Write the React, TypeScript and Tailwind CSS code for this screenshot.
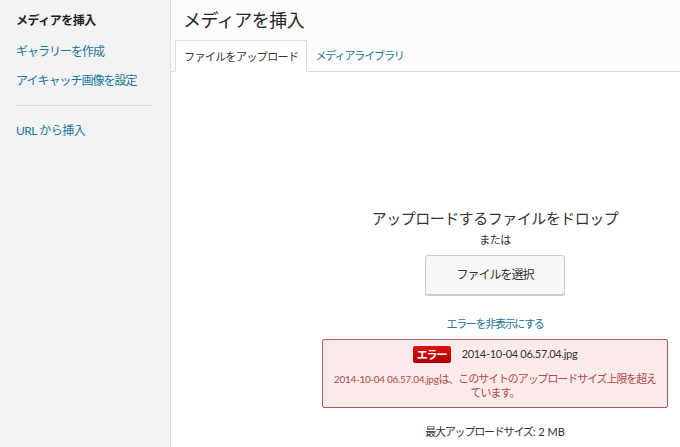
const FONT = "font-['Lato','Noto_Sans_CJK_JP',sans-serif]";

export default function App() {
  return (
    <div className={`flex h-[447px] w-[680px] overflow-hidden bg-white ${FONT}`}>
      {/* Sidebar menu */}
      <aside className="w-[171px] shrink-0 border-r border-[#dddddd] bg-[#f3f3f3] px-4 pt-[12px]">
        <div className="text-[12px] font-bold leading-[18px] tracking-[-0.5px] text-[#222]">メディアを挿入</div>
        <div className="mt-[13px] text-[12px] leading-[18px] tracking-[-1px] text-[#21759b]">ギャラリーを作成</div>
        <div className="mt-[11px] text-[12px] leading-[18px] tracking-[-1px] text-[#21759b]">アイキャッチ画像を設定</div>
        <div className="mt-[15px] mr-[1px] h-px bg-[#dfdfdf]" />
        <div className="mt-[16px] text-[12px] leading-[18px] tracking-[-0.5px] text-[#21759b]">URL から挿入</div>
      </aside>

      {/* Main frame */}
      <main className="flex min-w-0 flex-1 flex-col">
        <header className="bg-[#fcfcfc]">
          <h1 className="pl-[12px] pt-[8px] text-[18px] font-normal leading-[24px] tracking-[-0.5px] text-[#23282d]">
            メディアを挿入
          </h1>
          <div className="mt-[8px] flex items-end border-b border-[#dddddd] pl-[4px]">
            <div className="-mb-px border border-b-white border-[#dddddd] bg-white px-[8px] pb-[6px] pt-[7px] text-[11px] leading-[17px] tracking-[-0.6px] text-[#333]">
              ファイルをアップロード
            </div>
            <div className="px-[8px] pb-[7px] pt-[7px] text-[11px] leading-[17px] tracking-[-1.1px] text-[#21759b]">
              メディアライブラリ
            </div>
          </div>
        </header>

        <section className="flex-1 bg-white">
          <div className="ml-[151px] flex w-[346px] flex-col items-center pt-[135px]">
            <div className="text-[15px] leading-[22px] tracking-[-0.5px] text-[#333]">アップロードするファイルをドロップ</div>
            <div className="mt-[3px] text-[11px] leading-[16px] tracking-[-0.5px] text-[#333]">または</div>
            <button className="mt-[7px] h-[40px] w-[140px] rounded-[3px] border border-[#cccccc] bg-[#f7f7f7] text-[12px] tracking-[-1px] text-[#333] shadow-[0_1px_0_#ccc]">
              ファイルを選択
            </button>
            <div className="mt-[21px] text-[11px] leading-[16px] tracking-[-1.3px] text-[#21759b]">エラーを非表示にする</div>
            <div className="mt-[7px] w-full rounded-[2px] border border-[#b3575c] bg-[#fbeaea] px-1 pb-[7px] pt-[5px] text-center">
              <div className="flex items-center justify-center gap-[11px]">
                <span className="rounded-[2px] bg-gradient-to-b from-[#e01010] to-[#aa0000] px-[4px] text-[11px] font-bold leading-[17px] tracking-[-1px] text-white">
                  エラー
                </span>
                <span className="text-[11px] leading-[18px] tracking-[-0.3px] text-[#333]">2014-10-04 06.57.04.jpg</span>
              </div>
              <div className="mt-[9px] whitespace-nowrap text-[11px] leading-[14px] text-[#b04a4a]">
                <span className="text-[10px] tracking-[-0.3px]">2014-10-04 06.57.04.jpg</span>
                <span className="tracking-[-1.1px]">は、このサイトのアップロードサイズ上限を超え</span>
                <br />
                <span className="tracking-[-1px]">ています。</span>
              </div>
            </div>
            <div className="mt-[16px] text-[11px] leading-[16px] text-[#333]">
              <span className="tracking-[-1.2px]">最大アップロードサイズ</span>: 2 MB
            </div>
          </div>
        </section>
      </main>
    </div>
  );
}
